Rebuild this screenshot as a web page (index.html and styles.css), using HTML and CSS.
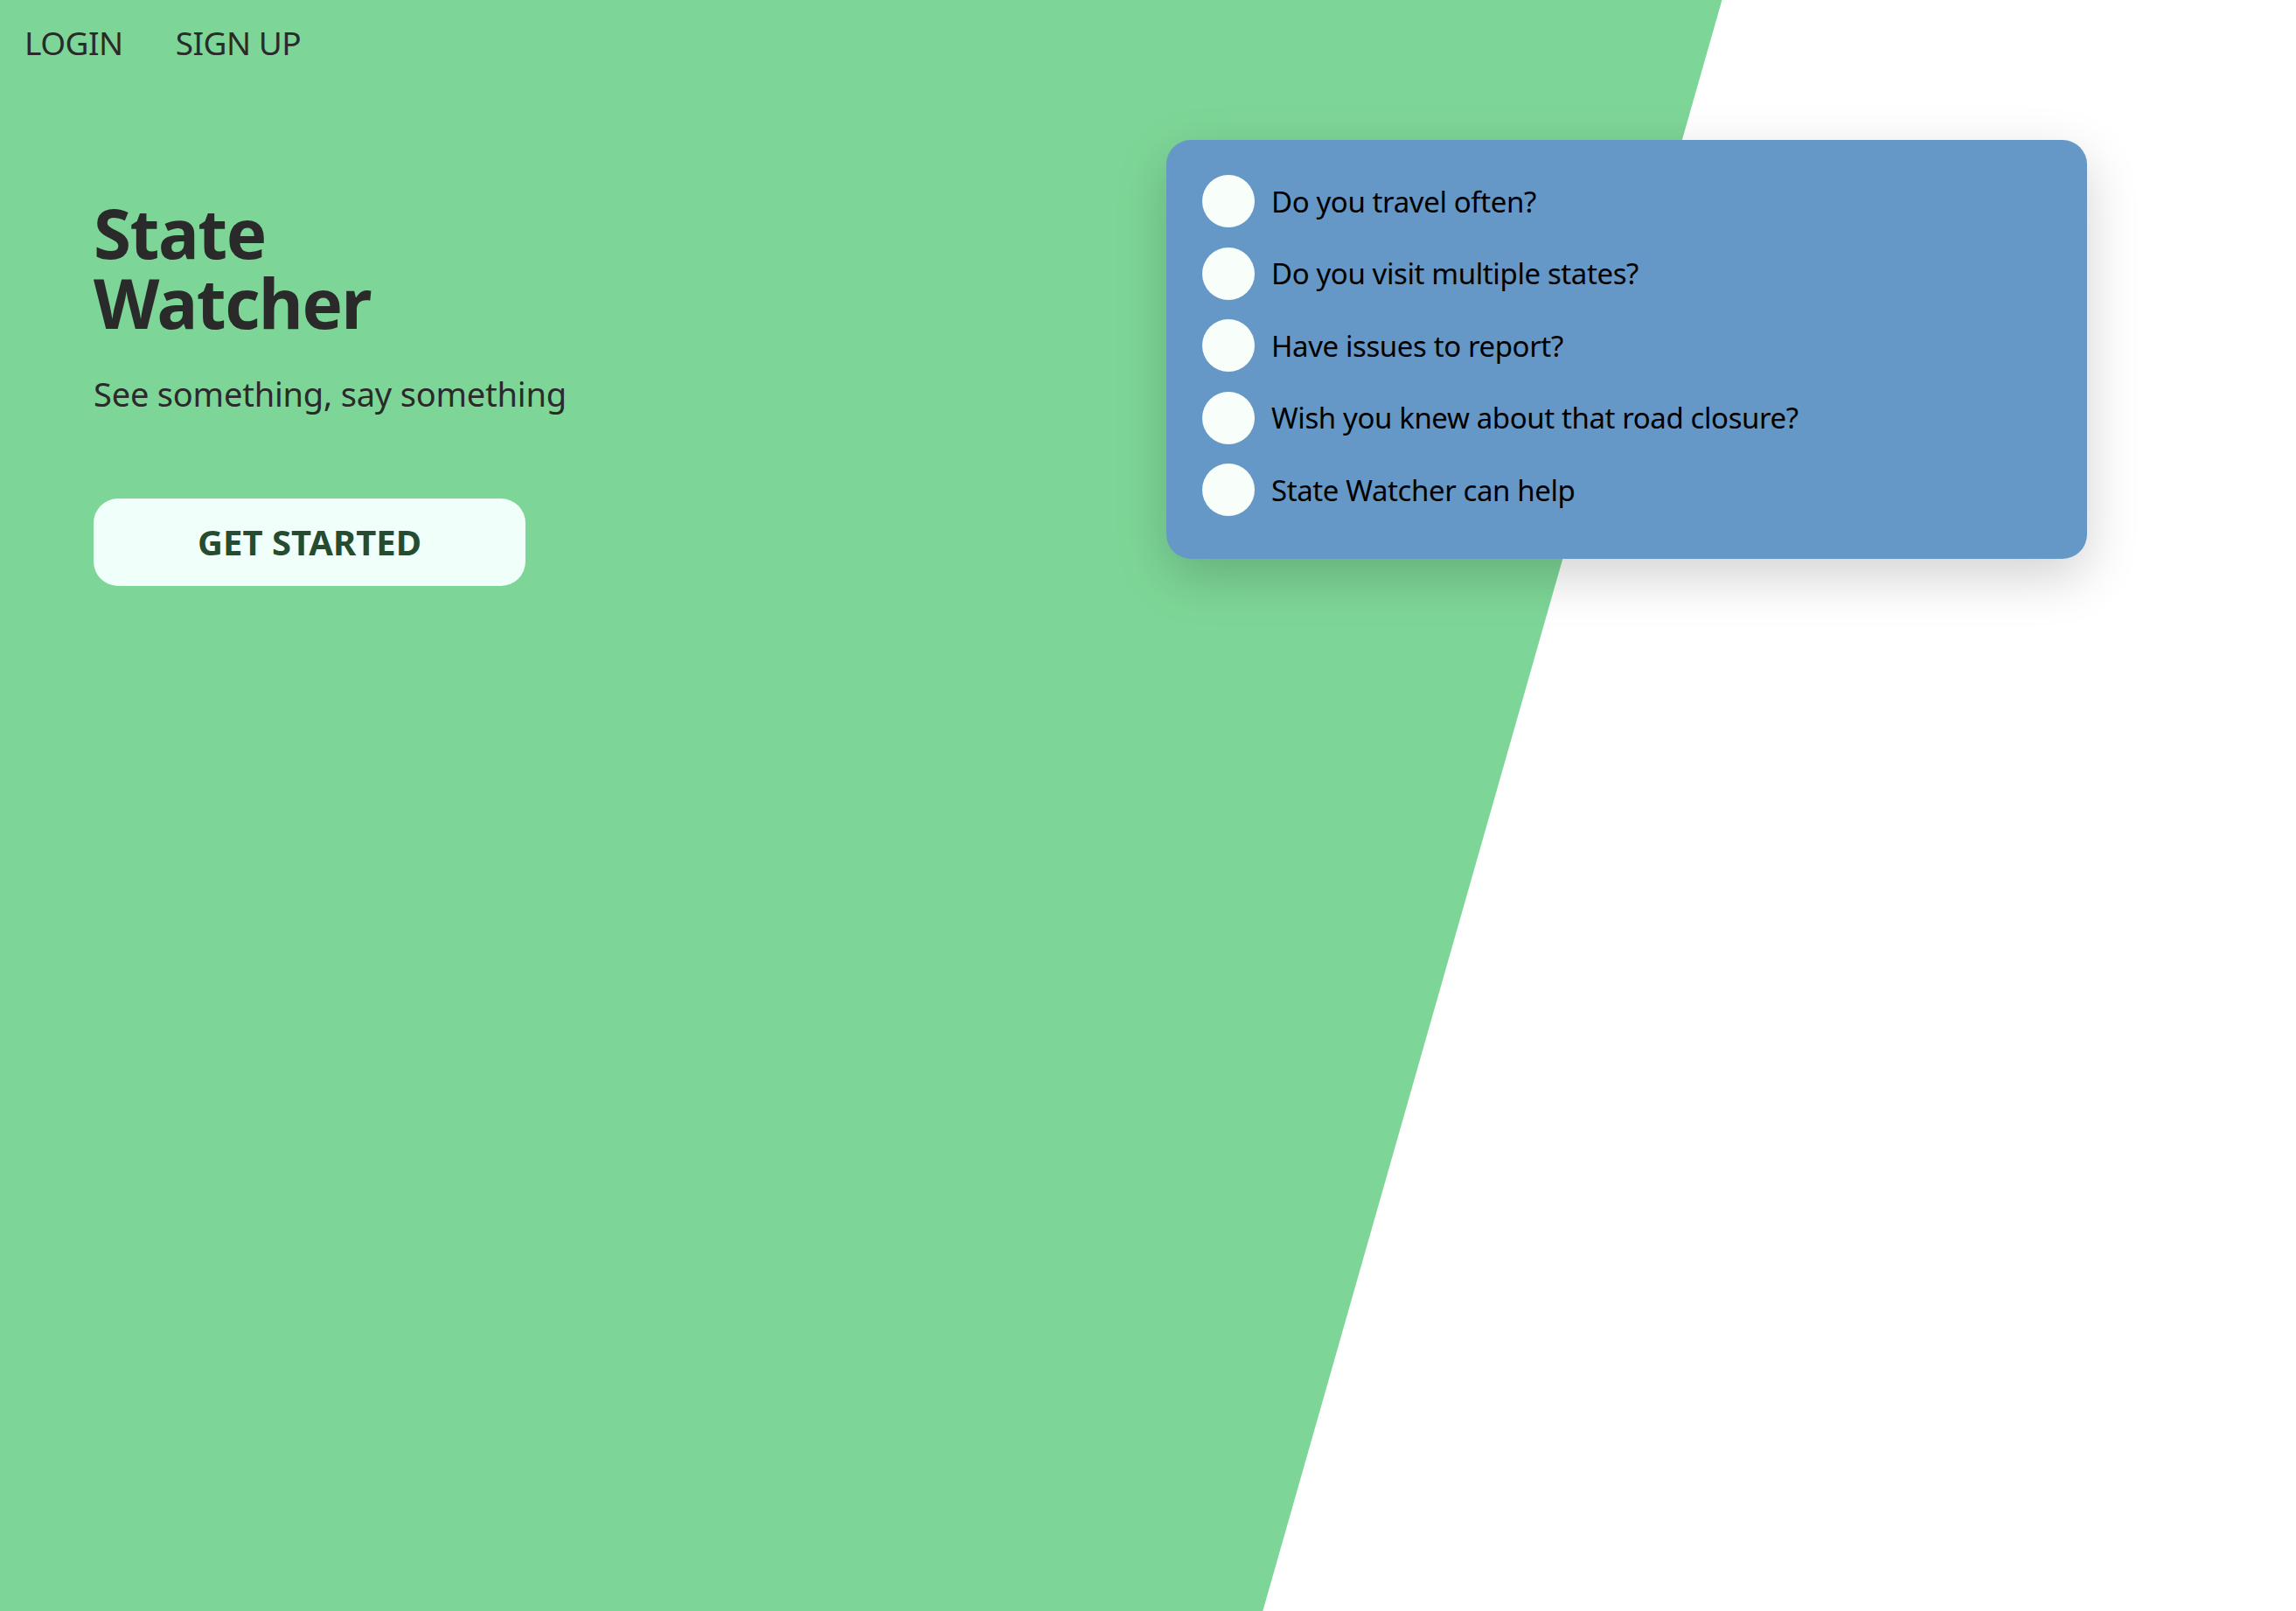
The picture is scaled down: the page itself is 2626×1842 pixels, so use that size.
FILE: index.html
```html
<!DOCTYPE html>
<html>
<head>
<meta charset="utf-8">
<link rel="stylesheet" href="styles.css">
</head>
<body>
<div class="bg"></div>
<header class="nav">
  <a class="nav-link" href="#">LOGIN</a>
  <a class="nav-link" href="#">SIGN UP</a>
</header>
<main class="main">
  <section class="hero">
    <h1 class="title"><span class="title-line">State</span><span class="title-line">Watcher</span></h1>
    <p class="subtitle">See something, say something</p>
    <button class="cta">GET STARTED</button>
  </section>
  <section class="card">
    <div class="row"><span class="dot"></span><span class="label">Do you travel often?</span></div>
    <div class="row"><span class="dot"></span><span class="label">Do you visit multiple states?</span></div>
    <div class="row"><span class="dot"></span><span class="label">Have issues to report?</span></div>
    <div class="row"><span class="dot"></span><span class="label">Wish you knew about that road closure?</span></div>
    <div class="row"><span class="dot"></span><span class="label">State Watcher can help</span></div>
  </section>
</main>
</body>
</html>
```
FILE: styles.css
```css
html, body {
  margin: 0;
  padding: 0;
}
body {
  width: 2626px;
  height: 1842px;
  overflow: hidden;
  background: #ffffff;
  font-family: "Noto Sans", "DejaVu Sans", sans-serif;
  color: #2a2a2a;
  position: relative;
}
.bg {
  position: absolute;
  inset: 0;
  background: #7dd697;
  clip-path: polygon(0 0, 75% 0, 55% 100%, 0 100%);
  z-index: 0;
}
.nav {
  position: relative;
  z-index: 1;
  display: flex;
  gap: 60px;
  padding: 30px 0 0 28px;
  height: 78px;
  box-sizing: border-box;
}
.nav-link {
  font-size: 37px;
  color: #2a2a2a;
  text-decoration: none;
  line-height: 1;
  letter-spacing: -0.5px;
}
.main {
  position: relative;
  z-index: 1;
  display: flex;
  justify-content: space-between;
  align-items: flex-start;
  padding: 82px 239px 0 107px;
}
.hero {
  padding-top: 66px;
}
.title {
  margin: 0;
  font-size: 78px;
  font-weight: 700;
  line-height: 80px;
  letter-spacing: -1.4px;
  color: #2a2a2a;
}
.title-line {
  display: block;
}
.subtitle {
  margin: 42px 0 0;
  font-size: 38px;
  line-height: 1.2;
  letter-spacing: -0.2px;
}
.cta {
  display: block;
  margin-top: 96px;
  width: 494px;
  height: 100px;
  border: none;
  border-radius: 28px;
  background: #f0fff9;
  color: #254c30;
  font-family: inherit;
  font-size: 40px;
  font-weight: 700;
  letter-spacing: 0;
  cursor: pointer;
}
.card {
  width: 1053px;
  box-sizing: border-box;
  background: #6598c7;
  border-radius: 28px;
  padding: 40px 40px 26px 41px;
  box-shadow: 0 20px 60px rgba(0, 0, 0, 0.18);
}
.row {
  display: flex;
  align-items: center;
  gap: 19px;
  height: 60px;
  margin-bottom: 22.5px;
}
.dot {
  width: 60px;
  height: 60px;
  border-radius: 50%;
  background: #f8fffb;
  flex: none;
}
.label {
  font-size: 33px;
  color: #000;
  letter-spacing: -0.4px;
}
```
